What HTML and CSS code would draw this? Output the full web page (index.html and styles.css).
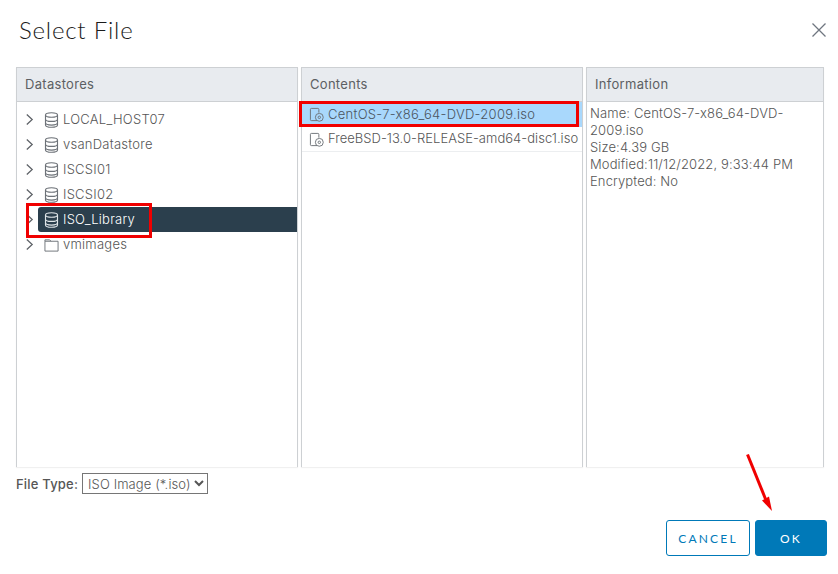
FILE: index.html
```html
<!DOCTYPE html>
<html lang="en">
<head>
<meta charset="utf-8">
<title>Select File</title>
<link rel="stylesheet" href="styles.css">
</head>
<body>
<svg class="defs" width="0" height="0" aria-hidden="true">
  <defs>
    <symbol id="chev" viewBox="0 0 10 14"><path d="M2 1.500 8 7l-6 5.500" fill="none" stroke="currentColor" stroke-width="1.400"/></symbol>
    <symbol id="db" viewBox="0 0 16 17"><g fill="none" stroke="currentColor" stroke-width="1.200"><path d="M1.600 3.200C1.600 1.500 4.500.8 8 .8s6.400.7 6.400 2.400v10.600c0 1.700-2.900 2.400-6.400 2.400s-6.400-.7-6.400-2.400z"/><path d="M1.600 3.200C1.600 4.900 4.500 5.600 8 5.600s6.400-.7 6.400-2.400M1.600 7.600c0 1.700 2.900 2.400 6.400 2.400s6.400-.7 6.400-2.400M1.600 11.500c0 1.700 2.900 2.400 6.400 2.400s6.400-.7 6.400-2.400"/></g></symbol>
    <symbol id="folder" viewBox="0 0 16 14"><path d="M1 3V1.500h5L7.500 3H15v10.500H1zM1 3h6.500" fill="none" stroke="currentColor" stroke-width="1"/></symbol>
    <symbol id="iso" viewBox="0 0 16 16"><g fill="none" stroke="currentColor" stroke-width="1"><path d="M8.500 14.500h-6a1 1 0 0 1-1-1v-11a1 1 0 0 1 1-1h7a1 1 0 0 1 1 1V6"/><circle cx="11" cy="11" r="4.200"/><circle cx="11" cy="11" r="1.300"/></g></symbol>
  </defs>
</svg>
<main class="dialog">
  <header class="title-bar">
    <h1 class="title">Select File</h1>
    <button class="close" aria-label="Close"><svg width="16" height="16" viewBox="0 0 16 16"><path d="M1.500 1.500l13 13M14.500 1.500l-13 13" stroke="#6f7680" stroke-width="1.300" fill="none"/></svg></button>
  </header>
  <section class="panes">
    <div class="pane pane-tree">
      <div class="pane-head">Datastores</div>
      <ul class="tree">
        <li class="tree-row"><svg class="chev"><use href="#chev"/></svg><span class="node"><svg class="ic-db"><use href="#db"/></svg><span class="label">LOCAL_HOST07</span></span></li>
        <li class="tree-row"><svg class="chev"><use href="#chev"/></svg><span class="node"><svg class="ic-db"><use href="#db"/></svg><span class="label">vsanDatastore</span></span></li>
        <li class="tree-row"><svg class="chev"><use href="#chev"/></svg><span class="node"><svg class="ic-db"><use href="#db"/></svg><span class="label">ISCSI01</span></span></li>
        <li class="tree-row"><svg class="chev"><use href="#chev"/></svg><span class="node"><svg class="ic-db"><use href="#db"/></svg><span class="label">ISCSI02</span></span></li>
        <li class="tree-row"><svg class="chev"><use href="#chev"/></svg><span class="node selected"><svg class="ic-db"><use href="#db"/></svg><span class="label">ISO_Library</span></span></li>
        <li class="tree-row"><svg class="chev"><use href="#chev"/></svg><span class="node"><svg class="ic-folder"><use href="#folder"/></svg><span class="label">vmimages</span></span></li>
      </ul>
    </div>
    <div class="pane pane-contents">
      <div class="pane-head">Contents</div>
      <ul class="files">
        <li class="file active"><svg class="ic-iso"><use href="#iso"/></svg><span class="label">CentOS-7-x86_64-DVD-2009.iso</span></li>
        <li class="file"><svg class="ic-iso"><use href="#iso"/></svg><span class="label">FreeBSD-13.0-RELEASE-amd64-disc1.iso</span></li>
      </ul>
    </div>
    <div class="pane pane-info">
      <div class="pane-head">Information</div>
      <div class="info">
        <div>Name: CentOS-7-x86_64-DVD-2009.iso</div>
        <div>Size:4.39 GB</div>
        <div>Modified:11/12/2022, 9:33:44 PM</div>
        <div>Encrypted: No</div>
      </div>
    </div>
  </section>
  <div class="file-type">
    <label class="ft-label" for="ft">File Type:</label>
    <select id="ft" class="ft-select"><option>ISO Image (*.iso)</option></select>
  </div>
  <footer class="actions">
    <button class="btn btn-outline">CANCEL</button>
    <button class="btn btn-primary">OK</button>
  </footer>
  <div class="mark mark-tree"></div>
  <div class="mark mark-file"></div>
  <svg class="arrow" width="40" height="70" viewBox="0 0 40 70"><path d="M2.500 1.500 20.500 46" stroke="#f00000" stroke-width="3" fill="none"/><path d="M17 47.500 24 43.500 27 58z" fill="#f00000"/></svg>
</main>
</body>
</html>
```
FILE: styles.css
```css
* { box-sizing: border-box; }
html, body { margin: 0; padding: 0; }
body { background: #fff; width: 838px; height: 574px; overflow: hidden; font-family: Inter, "Open Sans", sans-serif; font-weight: 300; color: #565656; }
.defs { position: absolute; }
.dialog { position: relative; width: 838px; height: 574px; padding: 0 14px 0 16px; }
.title-bar { display: flex; justify-content: space-between; align-items: center; height: 67px; padding: 0 0 7px 3px; }
.title { margin: 0; font: 300 24px/30px Lato, sans-serif; letter-spacing: .8px; color: #1b1b1b; }
.close { border: 0; background: none; padding: 0; display: flex; margin-right: -3px; }
.panes { display: flex; gap: 3px; height: 400px; }
.pane { border: 1px solid #cdd0d3; border-bottom: 0; background: #fff; display: flex; flex-direction: column; box-shadow: 0 1px 1px #f0f0f0; }
.pane-tree, .pane-contents { width: 282px; }
.pane-info { width: 238px; }
.pane-head { height: 34px; flex: none; background: #e8ebef; border-bottom: 1px solid #cdd0d3; padding-left: 8px; font: 400 13px/33px Inter, sans-serif; letter-spacing: .3px; color: #5c5f63; }
.tree, .files { list-style: none; margin: 0; padding: 0; }
.tree { padding-top: 5px; }
.tree-row { display: flex; align-items: center; height: 25px; padding-left: 8px; font-size: 13px; letter-spacing: .25px; }
.chev { width: 9px; height: 13px; color: #5f6368; margin-right: 4px; flex: none; }
.node { flex: 1; display: flex; align-items: center; height: 25px; padding-left: 6px; white-space: nowrap; color: #565656; border-radius: 3px 0 0 3px; }
.label { padding-bottom: 2px; }
.node.selected { background: #2b3f4d; color: #fff; }
.ic-db { width: 15px; height: 16px; margin-right: 4px; color: #6d7278; flex: none; }
.selected .ic-db { color: #dfe5e8; }
.ic-folder { width: 15px; height: 14px; margin-right: 4px; color: #6d7278; flex: none; }
.file { display: flex; align-items: center; height: 25px; padding-left: 7px; font-size: 13px; white-space: nowrap; color: #565656; border-bottom: 1px solid #eceef0; letter-spacing: .03px; }
.file.active { background: #a9d8fc; color: #4b5560; border-bottom: 0; letter-spacing: .28px; }
.ic-iso { width: 15px; height: 15px; margin-right: 4px; color: #6d7278; flex: none; }
.info { padding: 3px 3px; font-size: 13px; line-height: 17px; color: #565656; letter-spacing: .12px; }
.file-type { display: flex; align-items: center; gap: 4px; margin-top: 6px; height: 21px; }
.ft-label { font: 500 13px Inter, sans-serif; color: #565656; letter-spacing: .2px; }
.ft-select { width: 126px; height: 21px; border: 1px solid #767676; background: #fff; font: 300 13px Inter, sans-serif; color: #565656; padding: 0 0 0 1px; border-radius: 0; letter-spacing: .1px; }
.actions { display: flex; justify-content: flex-end; gap: 5px; margin-top: 26px; margin-right: -3px; }
.btn { height: 36px; border-radius: 3px; font: 400 12px Lato, sans-serif; letter-spacing: 2.200px; padding: 0; }
.btn-outline { width: 84px; background: #fff; border: 1px solid #0079b8; color: #0079b8; }
.btn-primary { width: 72px; background: #0079b8; border: 1px solid #0079b8; color: #fff; }
.mark { position: absolute; border: 3px solid #f00000; }
.mark-tree { left: 26px; top: 203px; width: 126px; height: 35px; }
.mark-file { left: 299px; top: 101px; width: 280px; height: 26px; }
.arrow { position: absolute; left: 745px; top: 453px; }
```
